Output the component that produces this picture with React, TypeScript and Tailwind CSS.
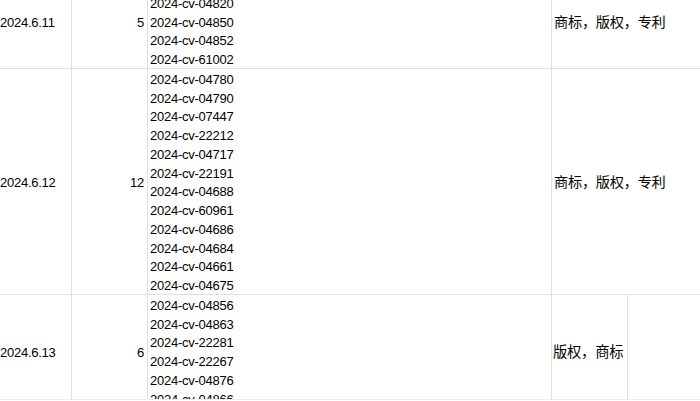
const rows = [
  {
    date: "2024.6.11",
    cases: ["2024-cv-04818", "2024-cv-04820", "2024-cv-04850", "2024-cv-04852", "2024-cv-61002"],
    category: "商标，版权，专利",
    wide: true,
  },
  {
    date: "2024.6.12",
    cases: [
      "2024-cv-04780",
      "2024-cv-04790",
      "2024-cv-07447",
      "2024-cv-22212",
      "2024-cv-04717",
      "2024-cv-22191",
      "2024-cv-04688",
      "2024-cv-60961",
      "2024-cv-04686",
      "2024-cv-04684",
      "2024-cv-04661",
      "2024-cv-04675",
    ],
    category: "商标，版权，专利",
    wide: true,
  },
  {
    date: "2024.6.13",
    cases: ["2024-cv-04856", "2024-cv-04863", "2024-cv-22281", "2024-cv-22267", "2024-cv-04876", "2024-cv-04866"],
    category: "版权，商标",
    wide: false,
  },
];

// Excel sits text a little low in the cell, hence the pt-[3px] on 15.75px lines
function Row({ row }: { row: (typeof rows)[number] }) {
  return (
    <div className="flex border-b border-[#e1e1e1]">
      <div className="flex w-[72px] shrink-0 items-center border-r border-[#e1e1e1] pt-[3px] whitespace-nowrap">
        {row.date}
      </div>
      <div className="flex w-[76px] shrink-0 items-center justify-end border-r border-[#e1e1e1] pt-[3px] pr-[3px]">
        {row.cases.length}
      </div>
      <div className="w-[404px] shrink-0 border-r border-[#e1e1e1] pl-[2px]">
        {row.cases.map((c) => (
          <div key={c} className="h-[18.75px] pt-[3px] leading-[15.75px]">
            {c}
          </div>
        ))}
      </div>
      {row.wide ? (
        <div className="flex flex-1 items-center pt-[3px] pl-[2px] text-[14.2px] whitespace-nowrap">{row.category}</div>
      ) : (
        <>
          <div className="flex w-[76px] shrink-0 items-center border-r border-[#e1e1e1] pt-[3px] pl-[1px] text-[14.3px] whitespace-nowrap">
            {row.category}
          </div>
          <div className="flex-1" />
        </>
      )}
    </div>
  );
}

export default function App() {
  return (
    <div
      className="relative h-[401px] w-[700px] overflow-hidden bg-white text-[13px] leading-[15.75px] tracking-[-0.25px] text-black"
      style={{ fontFamily: '"Liberation Sans", "Noto Sans CJK SC", sans-serif' }}
    >
      <div className="mt-[-26px]">
        {rows.map((r) => (
          <Row key={r.date} row={r} />
        ))}
      </div>
      <div className="absolute bottom-0 left-0 h-[2px] w-full border-t border-[#ececec] bg-white" />
    </div>
  );
}
